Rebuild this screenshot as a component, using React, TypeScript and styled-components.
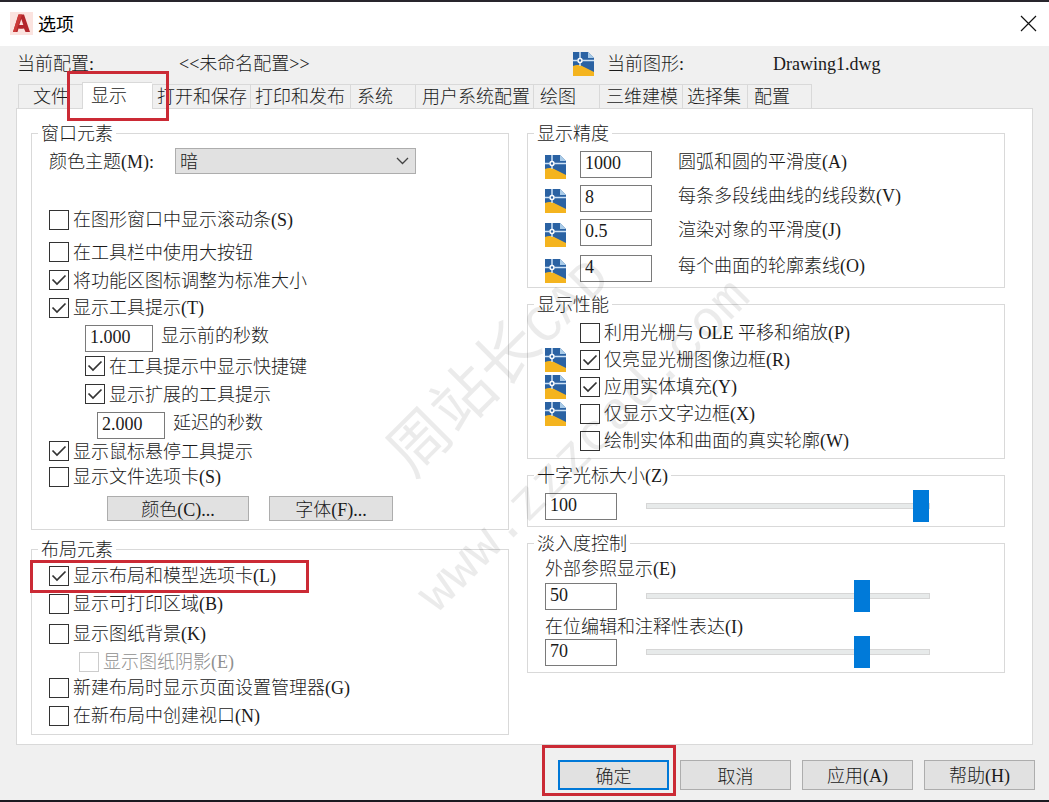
import React, { useId, useState } from "react";
import styled, { createGlobalStyle } from "styled-components";

const cjk = '"Noto Sans CJK SC", sans-serif';
const serif = '"Liberation Serif", "Noto Sans CJK SC", serif';
const mono = '"Liberation Mono", "Noto Sans CJK SC", monospace';

const GlobalStyle = createGlobalStyle`
  *, *::before, *::after { box-sizing: border-box; }
  body {
    margin: 0;
    background: #f0f0f0;
    color: #1a1a1a;
    font: 300 18px/22px ${cjk};
  }
  button, input, select { font: inherit; color: inherit; margin: 0; }
`;

const Dialog = styled.main`
  position: relative;
  min-height: 100vh;
  overflow: hidden;
  background: #f0f0f0;
  border-top: 2px solid #28252c;
  border-bottom: 2px solid #1b1a21;
`;

const TitleBar = styled.header`
  display: flex;
  align-items: center;
  gap: 5px;
  height: 44px;
  padding: 0 12px 2px 10px;
  background: #fff;
`;

const Title = styled.h1`
  flex: 1;
  margin: 0;
  font: 400 18px/22px ${cjk};
  color: #000;
`;

const CloseButton = styled.button`
  display: flex;
  padding: 0;
  border: 0;
  background: none;
`;

const ConfigBar = styled.div`
  display: grid;
  grid-template-columns: 162px 394px 34px 166px 1fr;
  align-items: start;
  height: 36px;
  padding: 6px 0 0 17px;
  line-height: 20px;
  white-space: nowrap;
`;

const TabStrip = styled.div`
  position: relative;
  display: flex;
  align-items: flex-end;
  padding-left: 18px;
`;

const Tab = styled.button<{ $width: number; $inset: number; $active?: boolean }>`
  position: relative;
  z-index: ${(p) => (p.$active ? 1 : 0)};
  width: ${(p) => p.$width}px;
  height: ${(p) => (p.$active ? 27 : 24)}px;
  margin-bottom: ${(p) => (p.$active ? -1 : 0)}px;
  padding: 0 0 4px ${(p) => p.$inset}px;
  border: 1px solid #d9d9d9;
  border-width: 1px 0 0 1px;
  background: ${(p) => (p.$active ? "#fff" : "#f0f0f0")};
  line-height: 20px;
  text-align: left;
  white-space: nowrap;
  &:last-of-type { border-right-width: 1px; }
`;

const Panel = styled.section`
  display: grid;
  grid-template-columns: 1fr 1fr;
  align-items: start;
  gap: 18px;
  margin: 0 16px;
  padding: 13px 27px 9px 14px;
  border: 1px solid #d9d9d9;
  background: #fff;
`;

const Column = styled.div<{ $gap: number }>`
  display: flex;
  flex-direction: column;
  gap: ${(p) => p.$gap}px;
`;

const Group = styled.fieldset`
  min-width: 0;
  margin: 0;
  padding: 0;
  border: 1px solid #d9d9d9;
`;

const Legend = styled.legend`
  height: 22px;
  margin-left: 6px;
  padding: 0 3px;
  line-height: 20px;
`;

const GroupBody = styled.div`
  display: flex;
  flex-direction: column;
  padding: 4px 17px;
`;

const Row = styled.div<{ $above?: number; $indent?: number; $gap?: number; $align?: string }>`
  position: relative;
  display: flex;
  align-items: ${(p) => p.$align ?? "center"};
  gap: ${(p) => p.$gap ?? 4}px;
  margin-top: ${(p) => p.$above ?? 0}px;
  padding-left: ${(p) => p.$indent ?? 0}px;
`;

const Caption = styled.label`
  line-height: 18px;
  white-space: nowrap;
`;

const Latin = styled.span`
  font: 400 18px/1 ${serif};
  white-space: pre;
`;

const CheckLabel = styled.label<{ $dim?: boolean }>`
  display: flex;
  align-items: center;
  gap: 4px;
  height: 20px;
  line-height: 18px;
  white-space: nowrap;
  color: ${(p) => (p.$dim ? "#8f8f8f" : "inherit")};
`;

const CheckText = styled.span`
  padding-bottom: 2px;
`;

const CheckCell = styled.span`
  display: grid;
  width: 20px;
  height: 20px;
  > * { grid-area: 1 / 1; }
`;

const CheckInput = styled.input`
  appearance: none;
  width: 20px;
  height: 20px;
  border: 1px solid #333;
  background: #fff;
  &:disabled { border-color: #ccc; }
`;

const TickSvg = styled.svg`
  z-index: 1;
  pointer-events: none;
`;

const TextField = styled.input<{ $width: number }>`
  flex: none;
  width: ${(p) => p.$width}px;
  height: 27px;
  padding: 0 4px 2px;
  border: 1px solid #7a7a7a;
  background: #fff;
  font: 400 18px/20px ${serif};
`;

const SelectBox = styled.div`
  position: relative;
  width: 241px;
  height: 26px;
  margin-left: auto;
  margin-right: 75px;
`;

const ThemeSelect = styled.select`
  appearance: none;
  width: 100%;
  height: 100%;
  padding: 0 4px 2px;
  border: 1px solid #adadad;
  border-radius: 0;
  background: #e1e1e1;
  line-height: 22px;
`;

const Chevron = styled.svg`
  position: absolute;
  right: 7px;
  top: 9px;
  pointer-events: none;
`;

const PushButton = styled.button<{ $width: number; $tall?: boolean; $primary?: boolean }>`
  width: ${(p) => p.$width}px;
  height: ${(p) => (p.$tall ? 30 : 25)}px;
  padding: 0 0 1px;
  border: ${(p) => (p.$primary ? "2px solid #0078d7" : "1px solid #adadad")};
  background: #e1e1e1;
  line-height: 20px;
`;

const Slider = styled.input`
  appearance: none;
  width: 284px;
  height: 32px;
  margin-left: 21px;
  background: transparent;
  &::-webkit-slider-runnable-track {
    height: 6px;
    border: 1px solid #d6d6d6;
    background: #e7eaea;
  }
  &::-webkit-slider-thumb {
    appearance: none;
    width: 16px;
    height: 32px;
    margin-top: -14px;
    background: #007ad9;
  }
`;

const IconSlot = styled.span`
  display: flex;
  flex: none;
  width: 21px;
  height: 24px;
`;

const Footer = styled.footer`
  display: flex;
  justify-content: flex-end;
  gap: 11px;
  padding: 15px 14px 10px;
`;

const FooterSlot = styled.div`
  position: relative;
  display: flex;
`;

const Highlight = styled.span<{ $inset: string }>`
  position: absolute;
  z-index: 2;
  inset: ${(p) => p.$inset};
  border: 3px solid #cb2a35;
  pointer-events: none;
`;

const TabHighlight = styled(Highlight)`
  width: 102px;
`;

const RowHighlight = styled(Highlight)`
  width: 279px;
`;

const Watermark = styled.div<{ $x: number; $y: number }>`
  position: absolute;
  z-index: 3;
  left: ${(p) => p.$x}px;
  top: ${(p) => p.$y}px;
  transform: translate(-50%, -50%) rotate(-45deg);
  color: rgba(0, 0, 0, 0.08);
  font: 400 62px/70px ${cjk};
  white-space: nowrap;
  pointer-events: none;
`;

const WatermarkLatin = styled.span`
  font: 400 53px/70px ${mono};
`;

// Sets ASCII runs in the serif face, whose figures are half a Han character wide.
function Mixed({ text }: { text: string }) {
  return (
    <span>
      {text.split(/([\x20-\x7e]+)/).map((part, i) =>
        i % 2 ? <Latin key={i}>{part}</Latin> : part
      )}
    </span>
  );
}

function AppLogo() {
  return (
    <svg width="23" height="23" viewBox="0 0 23 23" aria-hidden="true">
      <rect width="23" height="23" fill="#fbe3df" />
      <path d="M8.500 2.500h5.500L20 20h-4.500l-1.500-3.500c-2 .3-4 .3-5.500 0L7.500 20H3z" fill="#b3262b" />
      <path d="M11.300 7l2 6h-4z" fill="#fbe3df" />
      <path d="M8.500 2.500h3.500L6 20H3z" fill="#cc3a38" />
    </svg>
  );
}

function DrawingIcon() {
  return (
    <svg width="21" height="24" viewBox="0 0 21 24" aria-hidden="true">
      <path d="M0 0h15l6 6v18H0z" fill="#2a62a3" />
      <path d="M15 0l6 6h-6z" fill="#a9cbe8" />
      <path d="M0 14c4-1.500 7-1 10 .5L21 20v4H0z" fill="#f4b41f" />
      <path d="M7 0v6M7 11v3M0 8.500h4.500M9.500 8.500H21" stroke="#cfe4f7" strokeWidth="1.500" />
      <circle cx="7" cy="8.500" r="2" fill="#2a62a3" stroke="#fff" strokeWidth="1.500" />
    </svg>
  );
}

type CheckProps = { text: string; on?: boolean; disabled?: boolean };

function Check({ text, on = false, disabled }: CheckProps) {
  const [checked, setChecked] = useState(on);
  return (
    <CheckLabel $dim={disabled}>
      <CheckCell>
        <CheckInput
          type="checkbox"
          checked={checked}
          disabled={disabled}
          onChange={(e) => setChecked(e.target.checked)}
        />
        {checked && (
          <TickSvg width="20" height="20" viewBox="0 0 20 20" aria-hidden="true">
            <path d="M3.500 9.500l4.500 4.500 8.500-8.500" fill="none" stroke="#333" strokeWidth="1.700" />
          </TickSvg>
        )}
      </CheckCell>
      <CheckText><Mixed text={text} /></CheckText>
    </CheckLabel>
  );
}

function SecondsField(props: { value: string; text: string; above: number; indent: number }) {
  const id = useId();
  return (
    <Row $above={props.above} $indent={props.indent} $gap={8} $align="flex-start">
      <TextField id={id} $width={68} defaultValue={props.value} />
      <Caption htmlFor={id}>{props.text}</Caption>
    </Row>
  );
}

const PrecisionRow = styled(Row)`
  height: 28px;
  gap: 0;
  ${IconSlot} { align-self: flex-end; margin-right: 14px; }
  ${Caption} { margin-left: 26px; }
`;

function PrecisionField(props: { value: string; text: string; above: number }) {
  const id = useId();
  return (
    <PrecisionRow $above={props.above} $align="flex-start">
      <IconSlot><DrawingIcon /></IconSlot>
      <TextField id={id} $width={72} defaultValue={props.value} />
      <Caption htmlFor={id}><Mixed text={props.text} /></Caption>
    </PrecisionRow>
  );
}

const PerformanceRow = styled(Row)`
  height: 27px;
  gap: 14px;
`;

type SliderProps = { id: string; label: string; value: string; pos: number; max: number; above?: number };

function SliderField({ id, label, value, pos, max, above }: SliderProps) {
  return (
    <Row $gap={8} $above={above}>
      <TextField id={id} $width={72} defaultValue={value} aria-label={label} />
      <Slider type="range" min={0} max={max} defaultValue={pos} aria-label={label} />
    </Row>
  );
}

const tabs = [
  { text: "文件", width: 64, inset: 14 },
  { text: "显示", width: 70, inset: 8, active: true },
  { text: "打开和保存", width: 98, inset: 4 },
  { text: "打印和发布", width: 100, inset: 4 },
  { text: "系统", width: 65, inset: 6 },
  { text: "用户系统配置", width: 118, inset: 6 },
  { text: "绘图", width: 66, inset: 6 },
  { text: "三维建模", width: 83, inset: 6 },
  { text: "选择集", width: 65, inset: 4 },
  { text: "配置", width: 65, inset: 6 },
];

const performance = [
  { text: "利用光栅与 OLE 平移和缩放(P)", icon: false, on: false },
  { text: "仅亮显光栅图像边框(R)", icon: true, on: true },
  { text: "应用实体填充(Y)", icon: true, on: true },
  { text: "仅显示文字边框(X)", icon: true, on: false },
  { text: "绘制实体和曲面的真实轮廓(W)", icon: false, on: false },
];

export default function App() {
  return (
    <Dialog>
      <GlobalStyle />
      <TitleBar>
        <AppLogo />
        <Title>选项</Title>
        <CloseButton aria-label="关闭">
          <svg width="17" height="17" viewBox="0 0 17 17" aria-hidden="true">
            <path d="M1 1l15 15M16 1L1 16" stroke="#111" strokeWidth="1.200" />
          </svg>
        </CloseButton>
      </TitleBar>

      <ConfigBar>
        <Mixed text="当前配置:" />
        <Mixed text="<<未命名配置>>" />
        <IconSlot><DrawingIcon /></IconSlot>
        <Mixed text="当前图形:" />
        <Mixed text="Drawing1.dwg" />
      </ConfigBar>

      <TabStrip role="tablist">
        {tabs.map((t) => (
          <Tab key={t.text} role="tab" aria-selected={!!t.active} $width={t.width} $inset={t.inset} $active={t.active}>
            {t.text}
          </Tab>
        ))}
        <TabHighlight $inset="-11px auto -13px 67px" />
      </TabStrip>

      <Panel role="tabpanel">
        <Column $gap={8}>
          <Group>
            <Legend>窗口元素</Legend>
            <GroupBody>
              <Row>
                <Caption htmlFor="theme"><Mixed text="颜色主题(M):" /></Caption>
                <SelectBox>
                  <ThemeSelect id="theme" defaultValue="暗">
                    <option>暗</option>
                    <option>明</option>
                  </ThemeSelect>
                  <Chevron width="13" height="8" viewBox="0 0 13 8" aria-hidden="true">
                    <path d="M1 1l5.500 5.500L12 1" fill="none" stroke="#444" strokeWidth="1.300" />
                  </Chevron>
                </SelectBox>
              </Row>
              <Row $above={36}><Check text="在图形窗口中显示滚动条(S)" /></Row>
              <Row $above={12}><Check text="在工具栏中使用大按钮" /></Row>
              <Row $above={8}><Check text="将功能区图标调整为标准大小" on /></Row>
              <Row $above={8}><Check text="显示工具提示(T)" on /></Row>
              <SecondsField value="1.000" text="显示前的秒数" above={7} indent={36} />
              <Row $above={4} $indent={36}><Check text="在工具提示中显示快捷键" on /></Row>
              <Row $above={8} $indent={36}><Check text="显示扩展的工具提示" on /></Row>
              <SecondsField value="2.000" text="延迟的秒数" above={8} indent={48} />
              <Row $above={2}><Check text="显示鼠标悬停工具提示" on /></Row>
              <Row $above={6}><Check text="显示文件选项卡(S)" /></Row>
              <Row $above={9} $indent={58} $gap={20}>
                <PushButton $width={142}><Mixed text="颜色(C)..." /></PushButton>
                <PushButton $width={124}><Mixed text="字体(F)..." /></PushButton>
              </Row>
              <Row $above={4} />
            </GroupBody>
          </Group>

          <Group>
            <Legend>布局元素</Legend>
            <GroupBody>
              <Row $above={2}>
                <Check text="显示布局和模型选项卡(L)" on />
                <RowHighlight $inset="-6px auto -7px -19px" />
              </Row>
              <Row $above={8}><Check text="显示可打印区域(B)" /></Row>
              <Row $above={10}><Check text="显示图纸背景(K)" /></Row>
              <Row $above={8} $indent={30}><Check text="显示图纸阴影(E)" disabled /></Row>
              <Row $above={6}><Check text="新建布局时显示页面设置管理器(G)" /></Row>
              <Row $above={8}><Check text="在新布局中创建视口(N)" /></Row>
              <Row $above={4} />
            </GroupBody>
          </Group>
        </Column>

        <Column $gap={5}>
          <Group>
            <Legend>显示精度</Legend>
            <GroupBody>
              <PrecisionField value="1000" text="圆弧和圆的平滑度(A)" above={3} />
              <PrecisionField value="8" text="每条多段线曲线的线段数(V)" above={6} />
              <PrecisionField value="0.5" text="渲染对象的平滑度(J)" above={6} />
              <PrecisionField value="4" text="每个曲面的轮廓素线(O)" above={8} />
            </GroupBody>
          </Group>

          <Group>
            <Legend>显示性能</Legend>
            <GroupBody>
              {performance.map((p) => (
                <PerformanceRow key={p.text}>
                  <IconSlot>{p.icon && <DrawingIcon />}</IconSlot>
                  <Check text={p.text} on={p.on} />
                </PerformanceRow>
              ))}
            </GroupBody>
          </Group>

          <Group>
            <Legend><Mixed text="十字光标大小(Z)" /></Legend>
            <GroupBody>
              <SliderField id="cursor" label="十字光标大小" value="100" pos={100} max={100} />
            </GroupBody>
          </Group>

          <Group>
            <Legend>淡入度控制</Legend>
            <GroupBody>
              <Caption htmlFor="xref"><Mixed text="外部参照显示(E)" /></Caption>
              <SliderField id="xref" label="外部参照显示" value="50" pos={70} max={90} above={2} />
              <Row $above={4}>
                <Caption htmlFor="inplace"><Mixed text="在位编辑和注释性表达(I)" /></Caption>
              </Row>
              <SliderField id="inplace" label="在位编辑和注释性表达" value="70" pos={70} max={90} />
            </GroupBody>
          </Group>
        </Column>
      </Panel>

      <Footer>
        <FooterSlot>
          <PushButton $width={111} $tall $primary>确定</PushButton>
          <Highlight $inset="-15px -7px -6px -16px" />
        </FooterSlot>
        <PushButton $width={111} $tall>取消</PushButton>
        <PushButton $width={111} $tall><Mixed text="应用(A)" /></PushButton>
        <PushButton $width={111} $tall><Mixed text="帮助(H)" /></PushButton>
      </Footer>

      <Watermark $x={498} $y={363}>周站长<WatermarkLatin>CAD</WatermarkLatin></Watermark>
      <Watermark $x={580} $y={440}><WatermarkLatin>www.zzzcad.com</WatermarkLatin></Watermark>
    </Dialog>
  );
}
